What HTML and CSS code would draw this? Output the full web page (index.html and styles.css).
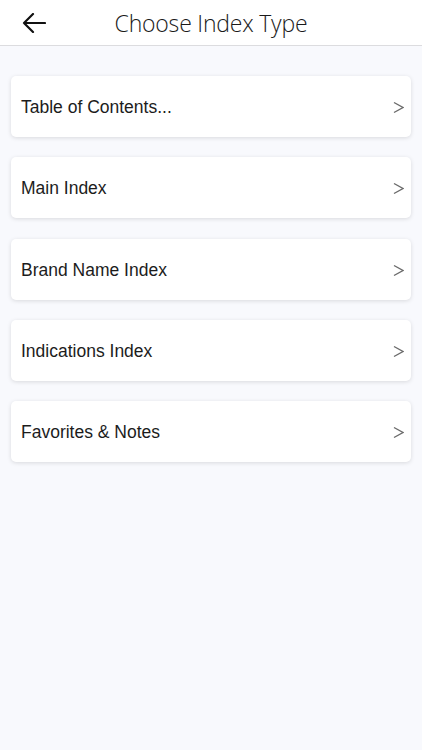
FILE: index.html
```html
<!DOCTYPE html>
<html>
<head>
<meta charset="utf-8">
<link rel="stylesheet" href="styles.css">
</head>
<body>
<header class="topbar">
  <button class="back" aria-label="Back">
    <svg width="24" height="20" viewBox="0 0 24 20"><path d="M23 10H2M11 1L2 10l9 9" fill="none" stroke="#111" stroke-width="2.2" stroke-linecap="round" stroke-linejoin="round"/></svg>
  </button>
  <h1 class="title">Choose Index Type</h1>
</header>
<main class="list">
  <div class="card"><span class="label">Table of Contents...</span><svg class="chev" width="11" height="13" viewBox="0 0 11 13"><path d="M1 1.5L10 6.5L1 11.5" fill="none" stroke="#6a6a6a" stroke-width="1.4"/></svg></div>
  <div class="card"><span class="label">Main Index</span><svg class="chev" width="11" height="13" viewBox="0 0 11 13"><path d="M1 1.5L10 6.5L1 11.5" fill="none" stroke="#6a6a6a" stroke-width="1.4"/></svg></div>
  <div class="card"><span class="label">Brand Name Index</span><svg class="chev" width="11" height="13" viewBox="0 0 11 13"><path d="M1 1.5L10 6.5L1 11.5" fill="none" stroke="#6a6a6a" stroke-width="1.4"/></svg></div>
  <div class="card"><span class="label">Indications Index</span><svg class="chev" width="11" height="13" viewBox="0 0 11 13"><path d="M1 1.5L10 6.5L1 11.5" fill="none" stroke="#6a6a6a" stroke-width="1.4"/></svg></div>
  <div class="card"><span class="label">Favorites &amp; Notes</span><svg class="chev" width="11" height="13" viewBox="0 0 11 13"><path d="M1 1.5L10 6.5L1 11.5" fill="none" stroke="#6a6a6a" stroke-width="1.4"/></svg></div>
</main>
</body>
</html>
```
FILE: styles.css
```css
html, body {
  margin: 0;
  padding: 0;
  height: 100%;
}
body {
  background: #f8f9fd;
  font-family: "Liberation Sans", Arial, sans-serif;
  color: #111;
}
.topbar {
  height: 45px;
  background: #fff;
  border-bottom: 1px solid #dcdcdf;
  display: flex;
  align-items: center;
  justify-content: center;
  position: relative;
}
.back {
  position: absolute;
  left: 22px;
  top: 13px;
  padding: 0;
  border: 0;
  background: none;
  display: flex;
}
.title {
  margin: 0;
  font-family: "Open Sans", sans-serif;
  font-weight: 300;
  font-size: 23px;
  color: #1a1a1a;
  letter-spacing: -0.2px;
}
.list {
  padding: 30px 11px 0;
  display: flex;
  flex-direction: column;
  gap: 20.25px;
}
.card {
  height: 61px;
  background: #fff;
  border-radius: 5px;
  box-shadow: 0 1px 4px rgba(0,0,0,0.13);
  display: flex;
  align-items: center;
  justify-content: space-between;
  padding: 0 7px 0 10px;
}
.label {
  font-size: 17.5px;
  color: #1c1c1c;
  padding-top: 2px;
}
.chev {
  margin-top: 2px;
}
```
